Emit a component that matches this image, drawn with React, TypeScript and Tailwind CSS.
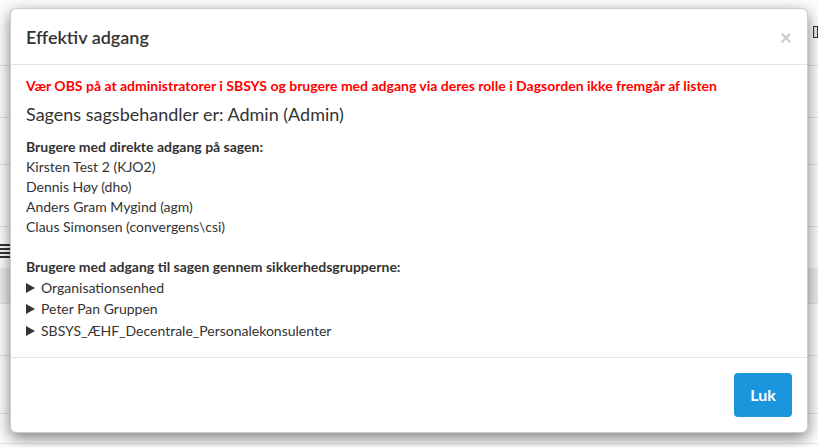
import React from 'react';

const directUsers = ['Kirsten Test 2 (KJO2)', 'Dennis Høy (dho)', 'Anders Gram Mygind (agm)', 'Claus Simonsen (convergens\\csi)'];
const groups = ['Organisationsenhed', 'Peter Pan Gruppen', 'SBSYS_ÆHF_Decentrale_Personalekonsulenter'];

const Caret = () => (
    <svg width="9" height="10" viewBox="0 0 9 10" className="shrink-0"><polygon points="0,0 9,5 0,10" fill="#333" /></svg>
);

const App: React.FC = () => {
    return (
        <div className="relative w-[818px] h-[447px] overflow-hidden bg-[#fdfdfd] font-['Lato','Liberation_Sans',sans-serif] text-[#333]">
            {/* page behind the dialog */}
            <div className="flex flex-col">
                <div className="h-[66px] border-b border-[#e3e3e3]"></div>
                <div className="h-[52px] border-b border-[#e3e3e3]"></div>
                <div className="h-[47px] border-b border-[#e3e3e3]"></div>
                <div className="h-[62px] border-b border-[#e3e3e3]"></div>
                <div className="h-[41px] flex items-center pt-[6px]">
                    <div className="flex flex-col gap-[2px] w-[10px]">
                        <div className="h-[2px] bg-[#333]"></div>
                        <div className="h-[2px] bg-[#333]"></div>
                        <div className="h-[2px] bg-[#333]"></div>
                        <div className="h-[2px] bg-[#333]"></div>
                    </div>
                </div>
                <div className="h-[36px] bg-[#ececec] border-b border-[#e3e3e3]"></div>
                <div className="h-[52px] border-b border-[#e3e3e3]"></div>
                <div className="h-[58px] border-b border-[#e3e3e3]"></div>
                <div className="h-[30px] border-b border-[#e3e3e3]"></div>
            </div>
            <div className="absolute right-0 top-[26px] w-[5px] h-[12px] border border-[#333] bg-[#d8e8f5]"></div>

            {/* dialog */}
            <div className="absolute left-[10px] top-[8px] w-[798px] bg-white rounded-[6px] border border-black/20 shadow-[0_5px_15px_rgba(0,0,0,0.5)]">
                <div className="flex items-center justify-between px-[15px] h-[56px] border-b border-[#e5e5e5]">
                    <h4 className="text-[18px] font-semibold leading-[26px] text-[#333]">Effektiv adgang</h4>
                    <span className="text-[21px] font-bold leading-none text-[#c9c9c9]">×</span>
                </div>
                <div className="px-[15px] pt-[11px] pb-[15px] text-[14px] leading-5">
                    <p className="font-bold text-[#ff0000]">Vær OBS på at administratorer i SBSYS og brugere med adgang via deres rolle i Dagsorden ikke fremgår af listen</p>
                    <p className="text-[18px] leading-[26px] mt-[5px] mb-[10px]">Sagens sagsbehandler er: Admin (Admin)</p>
                    <p className="font-bold">Brugere med direkte adgang på sagen:</p>
                    {directUsers.map((u) => (
                        <p key={u}>{u}</p>
                    ))}
                    <p className="font-bold mt-5">Brugere med adgang til sagen gennem sikkerhedsgrupperne:</p>
                    <div className="flex flex-col">
                        {groups.map((g) => (
                            <div key={g} className="flex items-center gap-[6px] h-[21.5px]">
                                <Caret />
                                <span>{g}</span>
                            </div>
                        ))}
                    </div>
                </div>
                <div className="flex justify-end p-[15px] border-t border-[#e5e5e5]">
                    <button className="w-[58px] h-[44px] rounded-[4px] bg-[#1b96dc] text-white text-[16px] font-bold">Luk</button>
                </div>
            </div>
        </div>
    );
};

export default App;
